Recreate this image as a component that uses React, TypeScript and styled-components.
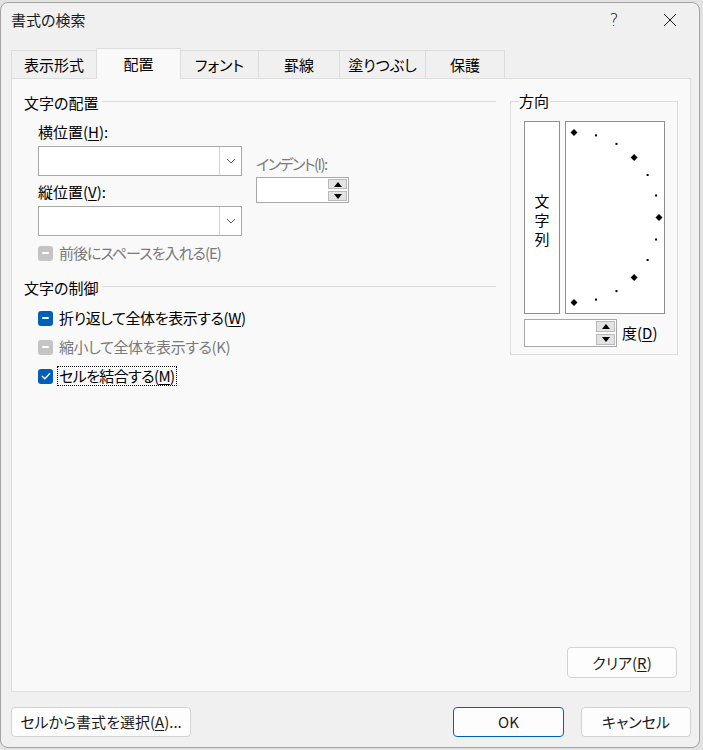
import React from "react";
import styled, { createGlobalStyle } from "styled-components";

const Global = createGlobalStyle`
  html, body { margin: 0; padding: 0; }
  body {
    background: #e2e2e2;
    font-family: "Noto Sans CJK JP", "Noto Sans", sans-serif;
    font-size: 15px;
    color: #000;
    font-feature-settings: "palt";
  }
  * { box-sizing: border-box; }
  u { text-underline-offset: 2px; text-decoration-thickness: 1px; }
`;

const Window = styled.div`
  width: 700px;
  height: 746px;
  margin-top: 2px;
  border: 1px solid #a3a3a3;
  border-radius: 8px;
  background: #f0f0f0;
  display: flex;
  flex-direction: column;
  overflow: hidden;
`;

const TitleBar = styled.div`
  height: 34px;
  display: flex;
  align-items: center;
  padding-left: 10px;
`;

const Title = styled.div`
  flex: 1;
  font-size: 15px;
  line-height: 20px;
  color: #1a1a1a;
`;

const Controls = styled.div`
  display: flex;
  gap: 10px;
  margin-right: 6px;
  height: 100%;
`;

const CtrlButton = styled.div`
  width: 46px;
  height: 100%;
  display: flex;
  align-items: center;
  justify-content: center;
  color: #1a1a1a;
  font-family: "DejaVu Sans", "Liberation Sans", sans-serif;
  font-size: 17px;
  font-weight: 300;
`;

const Body = styled.div`
  display: flex;
  flex-direction: column;
  padding: 0 8px 0 10px;
`;

const TabStrip = styled.div`
  display: flex;
  align-items: flex-end;
  height: 30px;
  margin-top: 11px;
  position: relative;
  z-index: 2;
`;

const Tab = styled.div<{ $w: number; $active?: boolean; $first?: boolean }>`
  width: ${(p) => p.$w}px;
  height: ${(p) => (p.$active ? 31 : 28)}px;
  margin-left: ${(p) => (p.$first ? 0 : -1)}px;
  margin-bottom: ${(p) => (p.$active ? -1 : 0)}px;
  border: 1px solid #dcdcdc;
  border-bottom: none;
  background: ${(p) => (p.$active ? "#f9f9f9" : "#f0f0f0")};
  position: relative;
  z-index: ${(p) => (p.$active ? 2 : 1)};
  display: flex;
  align-items: center;
  justify-content: center;
  padding-bottom: ${(p) => (p.$active ? 1 : 0)}px;
  font-size: 15px;
  line-height: 20px;
`;

const Panel = styled.div`
  width: 680px;
  height: 614px;
  border: 1px solid #dedede;
  background: #f9f9f9;
  display: flex;
  flex-direction: column;
  padding: 14px 12px 13px 12px;
  position: relative;
  z-index: 1;
`;

const ContentGrid = styled.div`
  display: grid;
  grid-template-columns: 472px 168px;
  column-gap: 14px;
  align-items: start;
`;

const Column = styled.div`
  display: flex;
  flex-direction: column;
`;

const SectionHeader = styled.div<{ $mt?: number }>`
  display: flex;
  align-items: flex-start;
  height: 20px;
  line-height: 20px;
  margin-top: ${(p) => p.$mt ?? 0}px;
`;

const SectionLine = styled.div`
  flex: 1;
  height: 1px;
  background: #dadada;
  margin-top: 8px;
  margin-left: 4px;
`;

const FieldsRow = styled.div`
  display: flex;
  gap: 14px;
  padding-left: 14px;
  margin-top: 9px;
`;

const FieldCol = styled.div<{ $mt?: number; $w?: number }>`
  display: flex;
  flex-direction: column;
  margin-top: ${(p) => p.$mt ?? 0}px;
  width: ${(p) => (p.$w ? `${p.$w}px` : "auto")};
`;

const FieldLabel = styled.div<{ $mt?: number; $disabled?: boolean; $ls?: number }>`
  height: 20px;
  line-height: 20px;
  margin-top: ${(p) => p.$mt ?? 0}px;
  color: ${(p) => (p.$disabled ? "#7a7a7a" : "#000")};
  letter-spacing: ${(p) => p.$ls ?? 0}px;
  white-space: nowrap;
`;

const Combo = styled.div<{ $mt?: number }>`
  width: 204px;
  height: 30px;
  margin-top: ${(p) => p.$mt ?? 0}px;
  border: 1px solid #a8a8a8;
  background: #fff;
  display: flex;
`;

const ComboField = styled.div`
  flex: 1;
`;

const ComboButton = styled.div`
  width: 22px;
  border-left: 1px solid #d4d4d4;
  display: flex;
  align-items: center;
  justify-content: center;
`;

const Spin = styled.div<{ $mt?: number; $h: number }>`
  width: 93px;
  height: ${(p) => p.$h}px;
  margin-top: ${(p) => p.$mt ?? 0}px;
  border: 1px solid #a8a8a8;
  background: #fff;
  display: flex;
  justify-content: flex-end;
  padding: 1px 1px 1px 0;
`;

const SpinButtons = styled.div`
  width: 19px;
  display: flex;
  flex-direction: column;
  gap: 2px;
`;

const SpinBtn = styled.div`
  flex: 1;
  background: #e3e3e3;
  border: 1px solid #b9b9b9;
  display: flex;
  align-items: center;
  justify-content: center;
`;

const CheckRow = styled.div<{ $mt?: number; $disabled?: boolean; $ls?: number }>`
  display: flex;
  align-items: center;
  height: 20px;
  padding-left: 14px;
  margin-top: ${(p) => p.$mt ?? 0}px;
  color: ${(p) => (p.$disabled ? "#7a7a7a" : "#000")};
  letter-spacing: ${(p) => p.$ls ?? 0}px;
  line-height: 20px;
  white-space: nowrap;
`;

const Box = styled.div<{ $disabled?: boolean }>`
  width: 15px;
  height: 15px;
  border-radius: 3px;
  background: ${(p) => (p.$disabled ? "#c4c4c4" : "#005fb8")};
  display: flex;
  align-items: center;
  justify-content: center;
  margin-right: 6px;
  flex: none;
`;

const Dash = styled.div`
  width: 7px;
  height: 2px;
  background: #fff;
  border-radius: 1px;
`;

const FocusLabel = styled.span`
  border: 1px dotted #000;
  padding: 0 1px;
  margin-left: -2px;
  height: 20px;
  line-height: 18px;
`;

const Group = styled.div`
  margin-top: 8px;
  border: 1px solid #dcdcdc;
  position: relative;
  padding: 19px 12px 6px 13px;
  display: flex;
  flex-direction: column;
  gap: 5px;
  height: 254px;
`;

const Legend = styled.span`
  position: absolute;
  top: -11px;
  left: 8px;
  background: #f9f9f9;
  line-height: 20px;
  padding-right: 1px;
`;

const OrientRow = styled.div`
  display: flex;
  gap: 5px;
  height: 193px;
`;

const TextPane = styled.div`
  width: 36px;
  border: 1px solid #8f8f8f;
  background: #fff;
  display: flex;
  flex-direction: column;
  align-items: center;
  justify-content: center;
  padding-top: 3px;
  line-height: 19px;
`;

const DialPane = styled.div`
  width: 100px;
  border: 1px solid #8f8f8f;
  background: #fff;
`;

const DegreeRow = styled.div`
  display: flex;
  align-items: center;
  gap: 5px;
  line-height: 20px;
`;

const Button = styled.button<{ $w: number; $default?: boolean }>`
  width: ${(p) => p.$w}px;
  height: 30px;
  border: 1px solid ${(p) => (p.$default ? "#005fb8" : "#d2d2d2")};
  border-radius: 4px;
  background: #fdfdfd;
  font-family: "Noto Sans CJK JP", "Noto Sans", sans-serif;
  font-feature-settings: "palt";
  font-size: 15px;
  color: #1b1b1b;
  padding: 0;
  display: flex;
  align-items: center;
  justify-content: center;
  line-height: 20px;
`;

const ClearRow = styled.div`
  margin-top: auto;
  display: flex;
  justify-content: flex-end;
  padding-right: 1px;
`;

const ClearButton = styled(Button)`
  height: 31px;
`;

const Footer = styled.div`
  display: flex;
  align-items: center;
  margin-top: 15px;
  height: 30px;
`;

const FooterRight = styled.div`
  margin-left: auto;
  display: flex;
  gap: 17px;
`;

const Chevron = () => (
  <svg width="10" height="6" viewBox="0 0 10 6">
    <polyline points="1,1 5,5 9,1" fill="none" stroke="#5a5a5a" strokeWidth="1" />
  </svg>
);

const TriUp = () => (
  <svg width="8" height="5" viewBox="0 0 8 5">
    <polygon points="0,5 8,5 4,0" fill="#000" />
  </svg>
);

const TriDown = () => (
  <svg width="8" height="5" viewBox="0 0 8 5">
    <polygon points="0,0 8,0 4,5" fill="#000" />
  </svg>
);

const SpinBox = ({ h, mt }: { h: number; mt?: number }) => (
  <Spin $h={h} $mt={mt}>
    <SpinButtons>
      <SpinBtn>
        <TriUp />
      </SpinBtn>
      <SpinBtn>
        <TriDown />
      </SpinBtn>
    </SpinButtons>
  </Spin>
);

const Dial = () => {
  const cx = 8;
  const cy = 95.5;
  const r = 85;
  const items: React.ReactNode[] = [];
  for (let a = 90; a >= -90; a -= 15) {
    const rad = (a * Math.PI) / 180;
    const x = cx + r * Math.cos(rad);
    const y = cy - r * Math.sin(rad);
    if (a % 45 === 0) {
      items.push(
        <polygon
          key={a}
          points={`${x},${y - 3.5} ${x + 3.5},${y} ${x},${y + 3.5} ${x - 3.5},${y}`}
          fill="#000"
        />
      );
    } else {
      items.push(<rect key={a} x={x - 1} y={y - 1} width="2" height="2" fill="#000" />);
    }
  }
  return (
    <svg width="98" height="191" viewBox="0 0 98 191">
      {items}
    </svg>
  );
};

const Check = () => (
  <svg width="10" height="8" viewBox="0 0 10 8">
    <polyline points="1,4 3.8,6.8 9,1.2" fill="none" stroke="#fff" strokeWidth="1.3" />
  </svg>
);

const tabs = [
  { label: "表示形式", w: 86 },
  { label: "配置", w: 85, active: true },
  { label: "フォント", w: 79 },
  { label: "罫線", w: 82 },
  { label: "塗りつぶし", w: 87 },
  { label: "保護", w: 80 },
];

export default function App() {
  return (
    <>
      <Global />
      <Window>
        <TitleBar>
          <Title>書式の検索</Title>
          <Controls>
            <CtrlButton>?</CtrlButton>
            <CtrlButton>
              <svg width="14" height="14" viewBox="0 0 14 14">
                <line x1="1" y1="1" x2="13" y2="13" stroke="#1a1a1a" strokeWidth="1" />
                <line x1="13" y1="1" x2="1" y2="13" stroke="#1a1a1a" strokeWidth="1" />
              </svg>
            </CtrlButton>
          </Controls>
        </TitleBar>
        <Body>
          <TabStrip>
            {tabs.map((t, i) => (
              <Tab key={t.label} $w={t.w} $active={t.active} $first={i === 0}>
                {t.label}
              </Tab>
            ))}
          </TabStrip>
          <Panel>
            <ContentGrid>
              <Column>
                <SectionHeader>
                  文字の配置
                  <SectionLine />
                </SectionHeader>
                <FieldsRow>
                  <FieldCol $w={204}>
                    <FieldLabel>
                      横位置(<u>H</u>):
                    </FieldLabel>
                    <Combo $mt={4}>
                      <ComboField />
                      <ComboButton>
                        <Chevron />
                      </ComboButton>
                    </Combo>
                    <FieldLabel $mt={6}>
                      縦位置(<u>V</u>):
                    </FieldLabel>
                    <Combo $mt={4}>
                      <ComboField />
                      <ComboButton>
                        <Chevron />
                      </ComboButton>
                    </Combo>
                  </FieldCol>
                  <FieldCol $mt={32}>
                    <FieldLabel $disabled $ls={-1.5}>
                      インデント(I):
                    </FieldLabel>
                    <SpinBox h={26} mt={3} />
                  </FieldCol>
                </FieldsRow>
                <CheckRow $mt={7} $disabled $ls={-1}>
                  <Box $disabled>
                    <Dash />
                  </Box>
                  前後にスペースを入れる(E)
                </CheckRow>
                <SectionHeader $mt={15}>
                  文字の制御
                  <SectionLine />
                </SectionHeader>
                <CheckRow $mt={10} $ls={-0.4}>
                  <Box>
                    <Dash />
                  </Box>
                  折り返して全体を表示する(<u>W</u>)
                </CheckRow>
                <CheckRow $mt={9} $disabled $ls={-0.4}>
                  <Box $disabled>
                    <Dash />
                  </Box>
                  縮小して全体を表示する(K)
                </CheckRow>
                <CheckRow $mt={9} $ls={-0.6}>
                  <Box>
                    <Check />
                  </Box>
                  <FocusLabel>
                    セルを結合する(<u>M</u>)
                  </FocusLabel>
                </CheckRow>
              </Column>
              <Group>
                <Legend>方向</Legend>
                <OrientRow>
                  <TextPane>
                    <span>文</span>
                    <span>字</span>
                    <span>列</span>
                  </TextPane>
                  <DialPane>
                    <Dial />
                  </DialPane>
                </OrientRow>
                <DegreeRow>
                  <SpinBox h={28} />
                  <span>
                    度(<u>D</u>)
                  </span>
                </DegreeRow>
              </Group>
            </ContentGrid>
            <ClearRow>
              <ClearButton $w={110}>
                クリア(<u>R</u>)
              </ClearButton>
            </ClearRow>
          </Panel>
          <Footer>
            <Button $w={180}>
              セルから書式を選択(<u>A</u>)...
            </Button>
            <FooterRight>
              <Button $w={111} $default>
                OK
              </Button>
              <Button $w={110}>キャンセル</Button>
            </FooterRight>
          </Footer>
        </Body>
      </Window>
    </>
  );
}
